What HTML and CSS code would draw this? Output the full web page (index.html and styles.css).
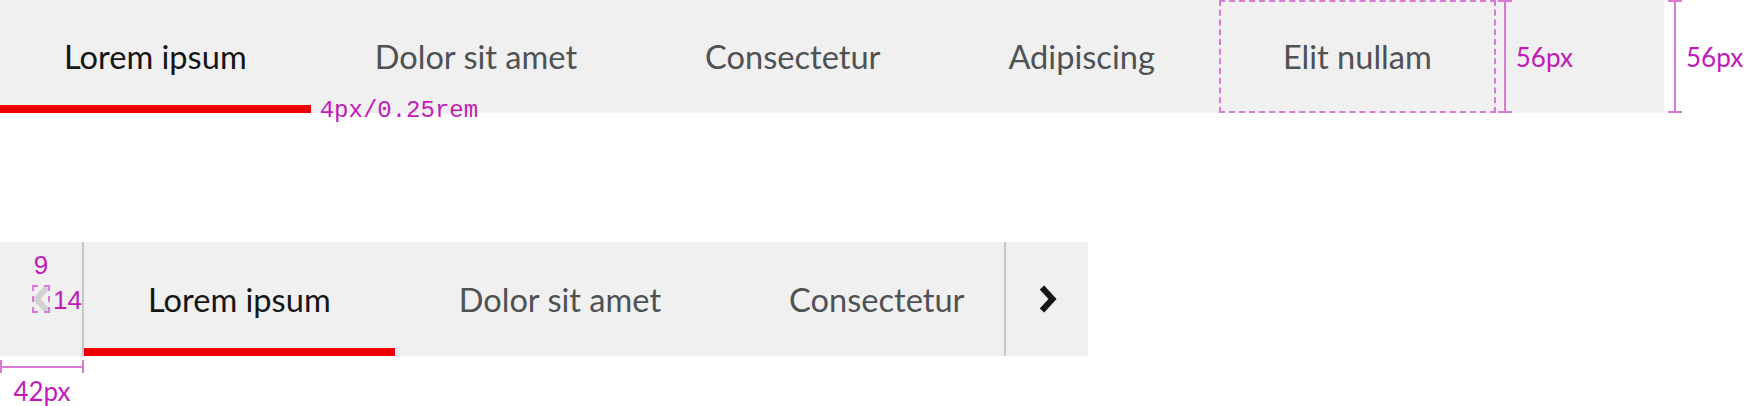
FILE: index.html
```html
<!DOCTYPE html>
<html lang="en">

<head>
    <meta charset="UTF-8">
    <meta name="viewport" content="width=device-width, initial-scale=1.0">
    <title>Tabs - spec</title>
    <link rel="stylesheet" href="styles.css">
</head>

<body>
    <!-- Tabs, full width -->
    <div class="spec-row">
        <nav class="tabs tabs-top">
            <button class="tab active">Lorem ipsum<span class="note note-indicator">4px/0.25rem</span></button>
            <button class="tab">Dolor sit amet</button>
            <button class="tab">Consectetur</button>
            <button class="tab">Adipiscing</button>
            <button class="tab tab-outlined">Elit nullam</button>
            <span class="measure-v in-bar"></span>
            <span class="measure-label">56px</span>
        </nav>
        <span class="measure-v outside"></span>
        <span class="measure-label">56px</span>
    </div>

    <!-- Tabs with scroll buttons -->
    <div class="tabs tabs-scroll">
        <button class="scroll-btn scroll-left" disabled>
            <span class="chevron-spec">
                <span class="note note-top">9</span>
                <svg class="chevron boxed" width="18" height="28" viewBox="0 0 18 28">
                    <polyline points="15,2.5 4.5,14 15,25.5" />
                </svg>
                <span class="note note-side">14</span>
            </span>
        </button>
        <div class="tabs-viewport">
            <button class="tab active">Lorem ipsum</button>
            <button class="tab">Dolor sit amet</button>
            <button class="tab">Consectetur</button>
        </div>
        <button class="scroll-btn scroll-right">
            <svg class="chevron" width="18" height="28" viewBox="0 0 18 28">
                <polyline points="3,2.5 13.5,14 3,25.5" />
            </svg>
        </button>
    </div>

    <div class="measure-h"></div>
    <div class="measure-h-label">42px</div>
</body>

</html>
```

FILE: styles.css
```css
body {
    margin: 0;
    background: #ffffff;
    font-family: 'Lato', 'Liberation Sans', sans-serif;
}

.spec-row {
    display: flex;
    align-items: stretch;
}

.tabs {
    display: flex;
    align-items: stretch;
    height: 113px;
    background: #f0f0f0;
}

.tabs-top {
    width: 1664px;
    flex-shrink: 0;
}

.tab {
    position: relative;
    display: flex;
    align-items: center;
    flex-shrink: 0;
    padding: 0 64px;
    border: none;
    background: none;
    font-family: inherit;
    font-size: 32.6px;
    color: #4f5255;
    white-space: nowrap;
    cursor: pointer;
}

.tab.active {
    color: #151515;
}

.tab.active::after {
    content: '';
    position: absolute;
    left: 0;
    right: 0;
    bottom: 0;
    height: 8px;
    background: #ee0000;
}

.tab-outlined {
    outline: 2px dashed #d67cd6;
    outline-offset: -2px;
}

/* spec annotations */
.note {
    position: absolute;
    color: #c11ab9;
    font-size: 26px;
    line-height: 26px;
    white-space: nowrap;
}

.note-indicator {
    left: calc(100% + 9px);
    top: 99px;
    font-family: 'Liberation Mono', monospace;
    font-size: 24px;
    line-height: 24px;
}

.measure-v {
    width: 14px;
    flex-shrink: 0;
    box-sizing: border-box;
    border-top: 2px solid #d67cd6;
    border-bottom: 2px solid #d67cd6;
    background: linear-gradient(#d67cd6, #d67cd6) center / 2px 100% no-repeat;
}

.measure-v.in-bar {
    margin-left: 2px;
}

.measure-v.outside {
    margin-left: 4px;
    height: 113px;
}

.measure-label {
    display: flex;
    align-items: center;
    margin-left: 4px;
    color: #c11ab9;
    font-size: 26px;
}

.tabs-scroll {
    width: 1088px;
    height: 114px;
    margin-top: 129px;
}

.tabs-viewport {
    display: flex;
    flex: 1;
    overflow: hidden;
}

.scroll-btn {
    display: flex;
    align-items: center;
    justify-content: center;
    width: 84px;
    flex-shrink: 0;
    padding: 0;
    border: none;
    background: none;
}

.scroll-left {
    border-right: 2px solid #c7c7c7;
}

.scroll-right {
    border-left: 2px solid #c7c7c7;
    padding-left: 2px;
}

.chevron polyline {
    fill: none;
    stroke: #151515;
    stroke-width: 6;
    stroke-linejoin: miter;
}

.scroll-left .chevron polyline {
    stroke: #d2d2d2;
}

.chevron-spec {
    position: relative;
    display: flex;
}

.chevron.boxed {
    outline: 2px dashed #d67cd6;
    outline-offset: -2px;
}

.note-top {
    bottom: calc(100% + 7px);
    left: 0;
    width: 100%;
    text-align: center;
}

.note-side {
    left: calc(100% + 3px);
    top: 2px;
}

.measure-h {
    width: 84px;
    height: 13px;
    margin-top: 4px;
    box-sizing: border-box;
    border-left: 2px solid #d67cd6;
    border-right: 2px solid #d67cd6;
    background: linear-gradient(#d67cd6, #d67cd6) center / 100% 2px no-repeat;
}

.measure-h-label {
    width: 84px;
    margin-top: 2px;
    text-align: center;
    color: #c11ab9;
    font-size: 26px;
}
```
